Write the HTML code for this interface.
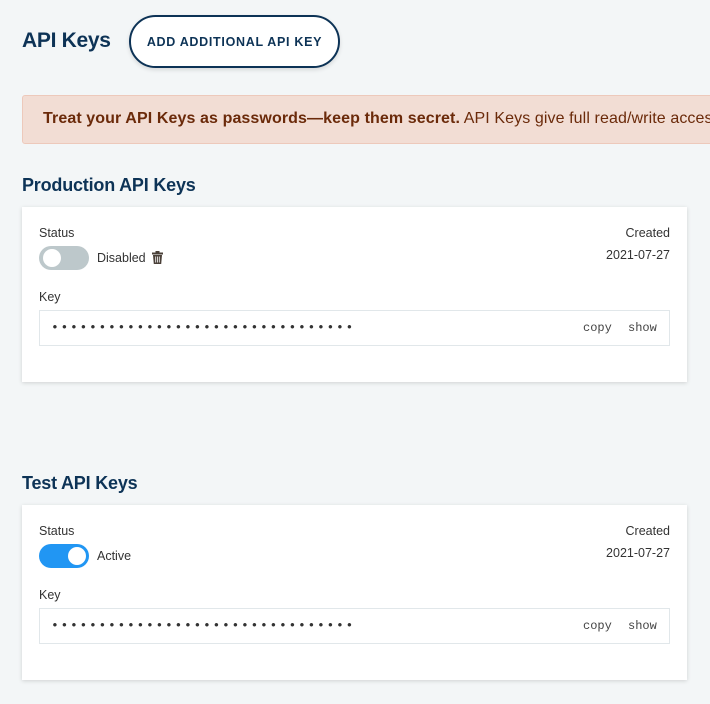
<!DOCTYPE html>
<html><head><meta charset="utf-8"><style>
*{box-sizing:border-box;margin:0;padding:0}
body{width:710px;height:704px;overflow:hidden;background:#f3f6f7;font-family:"Liberation Sans",sans-serif;color:#333;position:relative}
.abs{position:absolute;white-space:nowrap}
h1{position:absolute;left:22px;top:29px;font-size:21px;font-weight:bold;color:#0d3356;letter-spacing:-0.3px}
.btn{position:absolute;left:129px;top:15px;width:211px;height:53px;border:2px solid #0d3356;border-radius:27px;background:#fff;font-size:12.5px;font-weight:bold;color:#0d3356;letter-spacing:0.7px;text-align:center;line-height:51px;box-shadow:0 2px 4px rgba(0,0,0,.12)}
.banner{position:absolute;left:22px;top:95px;width:700px;height:49px;background:#f2ddd4;border:1px solid #edc9bb;border-radius:3px;font-size:16px;color:#6b2a0a;line-height:46px;padding-left:20px;white-space:nowrap;overflow:hidden;letter-spacing:0.1px}
h2{position:absolute;left:22px;font-size:18px;font-weight:bold;color:#0d3356;letter-spacing:-0.2px}
.card{position:absolute;left:22px;width:665px;height:175px;background:#fff;box-shadow:0 1px 4px rgba(0,0,0,.15)}
.lbl{position:absolute;font-size:12.5px;color:#333}
.tog{position:absolute;left:17px;top:39px;width:50px;height:24px;border-radius:12px}
.tog i{position:absolute;top:3px;width:18px;height:18px;border-radius:50%;background:#fff}
.key{position:absolute;left:17px;top:103px;width:631px;height:36px;border:1px solid #e1e7ea}
.dots{position:absolute;left:11px;top:9px;font-size:13px;letter-spacing:1.7px;color:#333;font-family:"Liberation Mono",monospace}
.act{position:absolute;top:10px;font-size:12px;font-family:"Liberation Mono",monospace;color:#444}
</style></head><body>
<h1>API Keys</h1>
<div class="btn">ADD ADDITIONAL API KEY</div>
<div class="banner"><b>Treat your API Keys as passwords—keep them secret.</b> API Keys give full read/write access</div>

<h2 style="top:175px">Production API Keys</h2>
<div class="card" style="top:207px">
<div class="lbl" style="left:17px;top:19px">Status</div>
<div class="tog" style="background:#bdc8cb"><i style="left:4px"></i></div>
<div class="lbl" style="left:75px;top:44px">Disabled</div>
<svg class="abs" style="left:130px;top:44px" width="11" height="13" viewBox="0 0 11 13"><rect x="0" y="1.5" width="11" height="2" fill="#4a4038"/><rect x="3.5" y="0" width="4" height="2" fill="#4a4038"/><path d="M1 4h9l-.8 9H1.8z" fill="#4a4038"/><path d="M3.7 5.5v6M5.5 5.5v6M7.3 5.5v6" stroke="#fff" stroke-width=".8"/></svg>
<div class="lbl" style="right:17px;top:19px">Created</div>
<div class="lbl" style="right:17px;top:41px">2021-07-27</div>
<div class="lbl" style="left:17px;top:83px">Key</div>
<div class="key"><span class="dots">••••••••••••••••••••••••••••••••</span><span class="act" style="left:543px">copy</span><span class="act" style="left:588px">show</span></div>
</div>

<h2 style="top:473px">Test API Keys</h2>
<div class="card" style="top:505px">
<div class="lbl" style="left:17px;top:19px">Status</div>
<div class="tog" style="background:#2196f3"><i style="left:29px"></i></div>
<div class="lbl" style="left:75px;top:44px">Active</div>
<div class="lbl" style="right:17px;top:19px">Created</div>
<div class="lbl" style="right:17px;top:41px">2021-07-27</div>
<div class="lbl" style="left:17px;top:83px">Key</div>
<div class="key"><span class="dots">••••••••••••••••••••••••••••••••</span><span class="act" style="left:543px">copy</span><span class="act" style="left:588px">show</span></div>
</div>
</body></html>
